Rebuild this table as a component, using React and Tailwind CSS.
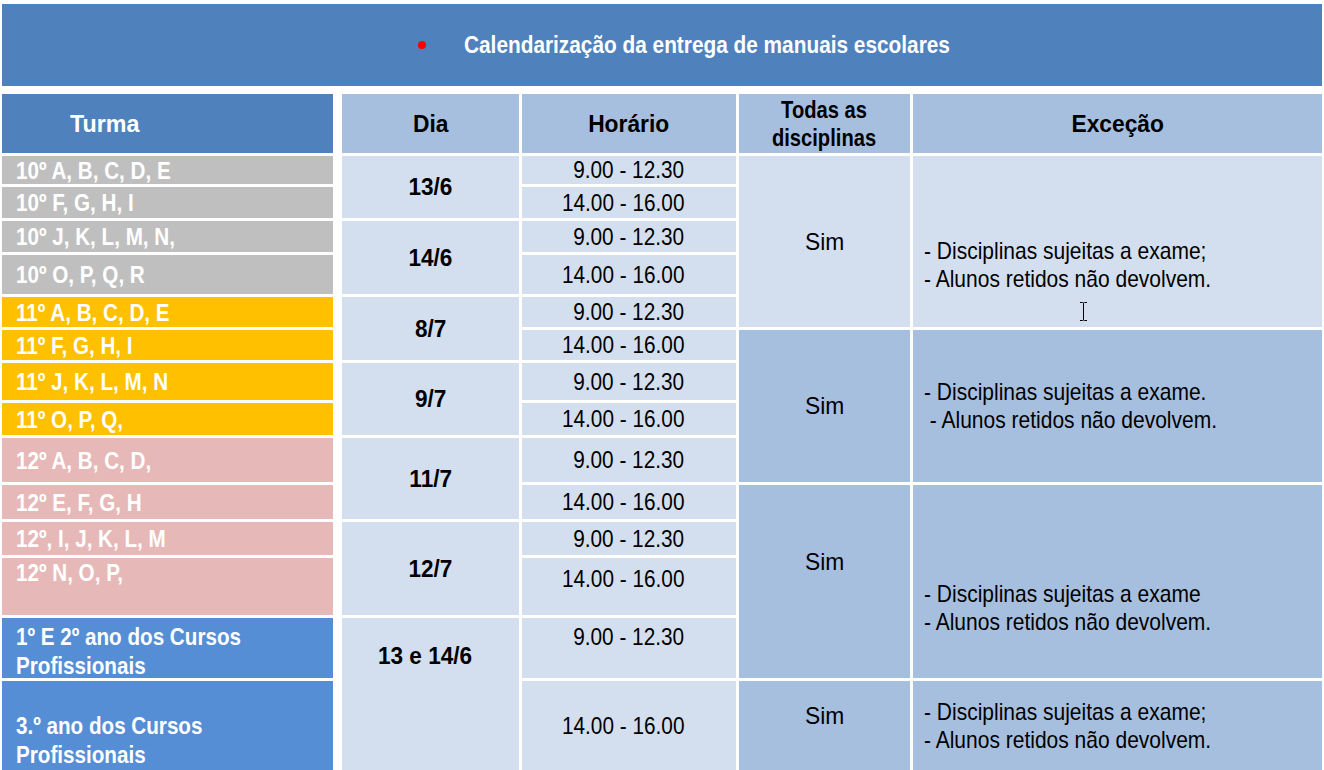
const turmas = [
  { label: '10º A, B, C, D, E', bg: 'bg-[#BFBFBF]', align: 'items-center' },
  { label: '10º F, G, H, I', bg: 'bg-[#BFBFBF]', align: 'items-center' },
  { label: '10º J, K, L, M, N,', bg: 'bg-[#BFBFBF]', align: 'items-center' },
  { label: '10º O, P, Q, R', bg: 'bg-[#BFBFBF]', align: 'items-center' },
  { label: '11º A, B, C, D, E', bg: 'bg-[#FFC000]', align: 'items-center' },
  { label: '11º F, G, H, I', bg: 'bg-[#FFC000]', align: 'items-center' },
  { label: '11º J, K, L, M, N', bg: 'bg-[#FFC000]', align: 'items-center' },
  { label: '11º O, P, Q,', bg: 'bg-[#FFC000]', align: 'items-center' },
  { label: '12º A, B, C, D,', bg: 'bg-[#E6B9B8]', align: 'items-center' },
  { label: '12º E, F, G, H', bg: 'bg-[#E6B9B8]', align: 'items-center' },
  { label: '12º, I, J, K, L, M', bg: 'bg-[#E6B9B8]', align: 'items-center' },
  { label: '12º N, O, P,', bg: 'bg-[#E6B9B8]', align: 'items-start' },
  { label: '1º E 2º ano dos Cursos\nProfissionais', bg: 'bg-[#558ED5]', align: 'items-start pt-[4px]' },
  { label: '3.º ano dos Cursos\nProfissionais', bg: 'bg-[#558ED5]', align: 'items-end pb-[1px]' },
]

const rowStart = [
  'row-start-2', 'row-start-3', 'row-start-4', 'row-start-5', 'row-start-6', 'row-start-7', 'row-start-8',
  'row-start-9', 'row-start-10', 'row-start-11', 'row-start-12', 'row-start-13', 'row-start-14', 'row-start-15',
]

const horarios = [
  { t: '9.00 - 12.30', align: 'items-center' },
  { t: '14.00 - 16.00', align: 'items-center' },
  { t: '9.00 - 12.30', align: 'items-center' },
  { t: '14.00 - 16.00', align: 'items-center' },
  { t: '9.00 - 12.30', align: 'items-center' },
  { t: '14.00 - 16.00', align: 'items-center' },
  { t: '9.00 - 12.30', align: 'items-center' },
  { t: '14.00 - 16.00', align: 'items-center' },
  { t: '9.00 - 12.30', align: 'items-center' },
  { t: '14.00 - 16.00', align: 'items-center' },
  { t: '9.00 - 12.30', align: 'items-center' },
  { t: '14.00 - 16.00', align: 'items-start pt-[7px]' },
  { t: '9.00 - 12.30', align: 'items-start pt-[5px]' },
  { t: '14.00 - 16.00', align: 'items-center' },
]

const dias = [
  { d: '13/6', cls: 'row-start-2 row-span-2 items-center' },
  { d: '14/6', cls: 'row-start-4 row-span-2 items-center' },
  { d: '8/7', cls: 'row-start-6 row-span-2 items-center' },
  { d: '9/7', cls: 'row-start-8 row-span-2 items-center' },
  { d: '11/7', cls: 'row-start-10 row-span-2 items-center' },
  { d: '12/7', cls: 'row-start-12 row-span-2 items-center' },
  { d: '13 e 14/6', cls: 'row-start-14 row-span-2 items-start pt-[24px] pr-[11px]' },
]

const font = "font-['Liberation_Sans',Arial,sans-serif]"

function ICursor() {
  return (
    <svg className="absolute left-[166px] top-[145px]" width="9" height="21" viewBox="0 0 9 21" fill="none" stroke="#000" strokeWidth="1">
      <path d="M1 1.5h2.5q1 0 1 1q0-1 1-1h2.5M4.5 2.5v16M1 19.5h2.5q1 0 1-1q0 1 1 1h2.5" />
    </svg>
  )
}

export default function App() {
  return (
    <div className={`w-[1324px] h-[770px] overflow-hidden bg-white pt-[4px] pl-[2px] ${font}`}>
      <div className="w-[1320px] h-[82px] bg-[#4F81BD] flex items-center pl-[416px] gap-[38px]">
        <span className="w-[8px] h-[8px] rounded-full bg-[#FF0000]" />
        <span className="inline-block origin-left scale-x-[0.905] text-white font-bold text-[23px] whitespace-nowrap">Calendarização da entrega de manuais escolares</span>
      </div>

      <div className="mt-[8px] grid grid-cols-[337px_177px_214px_171px_409px] grid-rows-[59px_28px_31px_31px_39px_30px_30px_37px_32px_44px_34px_33px_57px_60px_89px] gap-[3px] text-[24px] leading-[28px]">
        {/* Header */}
        <div className="col-start-1 row-start-1 mr-[6px] bg-[#4F81BD] text-white font-bold flex items-center pl-[68px]">
          <span className="inline-block origin-left scale-x-[0.97]">Turma</span>
        </div>
        <div className="col-start-2 row-start-1 bg-[#A7BFDE] text-black font-bold flex items-center justify-center">
          <span className="inline-block scale-x-[0.95]">Dia</span>
        </div>
        <div className="col-start-3 row-start-1 bg-[#A7BFDE] text-black font-bold flex items-center justify-center">
          <span className="inline-block scale-x-[0.95]">Horário</span>
        </div>
        <div className="col-start-4 row-start-1 bg-[#A7BFDE] text-black font-bold flex items-center justify-center text-center">
          <span className="inline-block scale-x-[0.84]">Todas as<br />disciplinas</span>
        </div>
        <div className="col-start-5 row-start-1 bg-[#A7BFDE] text-black font-bold flex items-center justify-center">
          <span className="inline-block scale-x-[0.95]">Exceção</span>
        </div>

        {/* Turma */}
        {turmas.map((t, i) => (
          <div key={i} className={`col-start-1 ${rowStart[i]} mr-[6px] ${t.bg} text-white font-bold flex ${t.align} pl-[14px] leading-[29px] whitespace-pre`}>
            <span className="inline-block origin-left scale-x-[0.86]">{t.label}</span>
          </div>
        ))}

        {/* Dia */}
        {dias.map((d, i) => (
          <div key={i} className={`col-start-2 ${d.cls} bg-[#D3DFEE] text-black font-bold flex justify-center`}>
            <span className="inline-block scale-x-[0.94]">{d.d}</span>
          </div>
        ))}

        {/* Horário */}
        {horarios.map((h, i) => (
          <div key={i} className={`col-start-3 ${rowStart[i]} bg-[#D3DFEE] text-black flex justify-end pr-[52px] ${h.align}`}>
            <span className="inline-block origin-right scale-x-[0.866]">{h.t}</span>
          </div>
        ))}

        {/* Todas as disciplinas */}
        <div className="col-start-4 row-start-2 row-span-5 bg-[#D3DFEE] text-black flex items-center justify-center">
          <span className="inline-block scale-x-[0.95]">Sim</span>
        </div>
        <div className="col-start-4 row-start-7 row-span-4 bg-[#A7BFDE] text-black flex items-center justify-center">
          <span className="inline-block scale-x-[0.95]">Sim</span>
        </div>
        <div className="col-start-4 row-start-11 row-span-4 bg-[#A7BFDE] text-black flex items-start justify-center pt-[63px]">
          <span className="inline-block scale-x-[0.95]">Sim</span>
        </div>
        <div className="col-start-4 row-start-15 bg-[#A7BFDE] text-black flex items-start justify-center pt-[21px]">
          <span className="inline-block scale-x-[0.95]">Sim</span>
        </div>

        {/* Exceção */}
        <div className="relative col-start-5 row-start-2 row-span-5 bg-[#D3DFEE] text-black pl-[11px] pt-[81px] whitespace-pre">
          <span className="inline-block origin-left scale-x-[0.875]">{'- Disciplinas sujeitas a exame;\n- Alunos retidos não devolvem.'}</span>
          <ICursor />
        </div>
        <div className="col-start-5 row-start-7 row-span-4 bg-[#A7BFDE] text-black pl-[11px] flex items-center whitespace-pre">
          <span className="inline-block origin-left scale-x-[0.875]">{'- Disciplinas sujeitas a exame.\n - Alunos retidos não devolvem.'}</span>
        </div>
        <div className="col-start-5 row-start-11 row-span-4 bg-[#A7BFDE] text-black pl-[11px] pt-[95px] whitespace-pre">
          <span className="inline-block origin-left scale-x-[0.875]">{'- Disciplinas sujeitas a exame\n- Alunos retidos não devolvem.'}</span>
        </div>
        <div className="col-start-5 row-start-15 bg-[#A7BFDE] text-black pl-[11px] flex items-center whitespace-pre">
          <span className="inline-block origin-left scale-x-[0.875]">{'- Disciplinas sujeitas a exame;\n- Alunos retidos não devolvem.'}</span>
        </div>
      </div>
    </div>
  )
}
